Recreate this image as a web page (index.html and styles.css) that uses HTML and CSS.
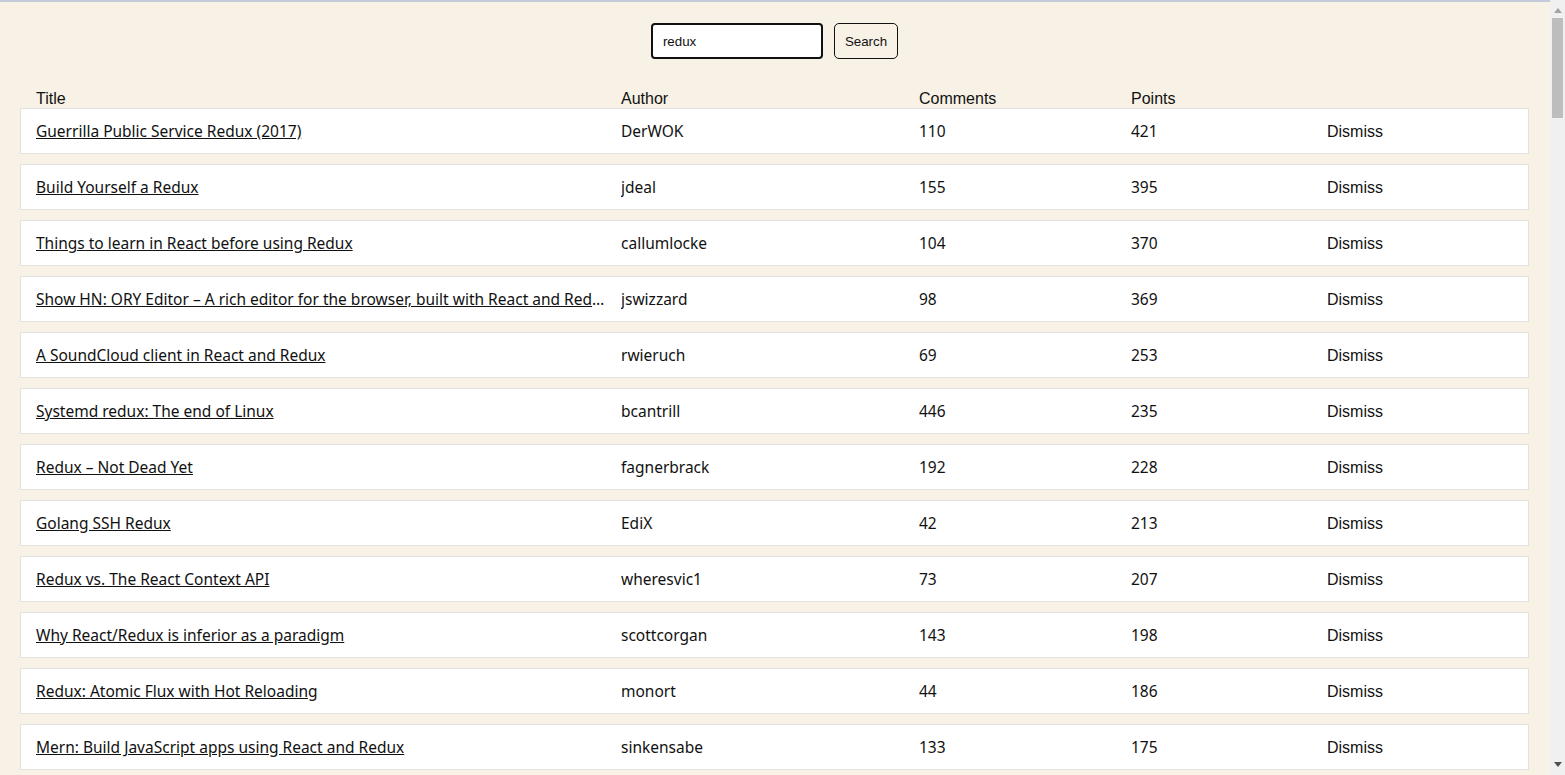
FILE: index.html
```html
<!DOCTYPE html>
<html>
<head>
<meta charset="utf-8">
<link rel="stylesheet" href="styles.css">
</head>
<body>
<div class="app">
  <form class="search">
    <input class="search-input" type="text" value="redux">
    <button class="search-btn" type="button">Search</button>
  </form>
  <div class="table">
    <div class="head">
      <span>Title</span><span>Author</span><span>Comments</span><span>Points</span><span></span>
    </div>
    <div class="row"><span class="c-title"><a href="#">Guerrilla Public Service Redux (2017)</a></span><span>DerWOK</span><span>110</span><span>421</span><span><button class="dismiss" type="button">Dismiss</button></span></div>
    <div class="row"><span class="c-title"><a href="#">Build Yourself a Redux</a></span><span>jdeal</span><span>155</span><span>395</span><span><button class="dismiss" type="button">Dismiss</button></span></div>
    <div class="row"><span class="c-title"><a href="#">Things to learn in React before using Redux</a></span><span>callumlocke</span><span>104</span><span>370</span><span><button class="dismiss" type="button">Dismiss</button></span></div>
    <div class="row"><span class="c-title"><a href="#">Show HN: ORY Editor – A rich editor for the browser, built with React and Redux</a></span><span>jswizzard</span><span>98</span><span>369</span><span><button class="dismiss" type="button">Dismiss</button></span></div>
    <div class="row"><span class="c-title"><a href="#">A SoundCloud client in React and Redux</a></span><span>rwieruch</span><span>69</span><span>253</span><span><button class="dismiss" type="button">Dismiss</button></span></div>
    <div class="row"><span class="c-title"><a href="#">Systemd redux: The end of Linux</a></span><span>bcantrill</span><span>446</span><span>235</span><span><button class="dismiss" type="button">Dismiss</button></span></div>
    <div class="row"><span class="c-title"><a href="#">Redux – Not Dead Yet</a></span><span>fagnerbrack</span><span>192</span><span>228</span><span><button class="dismiss" type="button">Dismiss</button></span></div>
    <div class="row"><span class="c-title"><a href="#">Golang SSH Redux</a></span><span>EdiX</span><span>42</span><span>213</span><span><button class="dismiss" type="button">Dismiss</button></span></div>
    <div class="row"><span class="c-title"><a href="#">Redux vs. The React Context API</a></span><span>wheresvic1</span><span>73</span><span>207</span><span><button class="dismiss" type="button">Dismiss</button></span></div>
    <div class="row"><span class="c-title"><a href="#">Why React/Redux is inferior as a paradigm</a></span><span>scottcorgan</span><span>143</span><span>198</span><span><button class="dismiss" type="button">Dismiss</button></span></div>
    <div class="row"><span class="c-title"><a href="#">Redux: Atomic Flux with Hot Reloading</a></span><span>monort</span><span>44</span><span>186</span><span><button class="dismiss" type="button">Dismiss</button></span></div>
    <div class="row"><span class="c-title"><a href="#">Mern: Build JavaScript apps using React and Redux</a></span><span>sinkensabe</span><span>133</span><span>175</span><span><button class="dismiss" type="button">Dismiss</button></span></div>
  </div>
</div>
<div class="scrollbar" aria-hidden="true">
  <span class="arrow-up"></span>
  <span class="thumb"></span>
  <span class="arrow-down"></span>
</div>
</body>
</html>
```
FILE: styles.css
```css
html, body {
  margin: 0;
  padding: 0;
}
body {
  background: #f8f1e6;
  border-top: 2px solid #c3cad9;
  color: #111;
  font-family: "Liberation Sans", Arial, sans-serif;
  overflow: hidden;
  height: 773px;
}
.app {
  padding: 21px 36px 0 20px;
}
.search {
  display: flex;
  justify-content: center;
  gap: 11px;
  margin: 0;
}
.search-input {
  width: 172px;
  height: 36px;
  box-sizing: border-box;
  border: 2px solid #111;
  border-radius: 4px;
  padding: 0 10px;
  font-family: "Liberation Sans", Arial, sans-serif;
  font-size: 13.33px;
  background: #fff;
  color: #111;
}
.search-btn {
  height: 36px;
  box-sizing: border-box;
  border: 1px solid #111;
  border-radius: 5px;
  background: transparent;
  padding: 0 10px;
  font-family: "Liberation Sans", Arial, sans-serif;
  font-size: 13.33px;
  color: #111;
}
.table {
  margin-top: 19px;
}
.head, .row {
  display: grid;
  grid-template-columns: 585px 298px 212px 196px 1fr;
  align-items: center;
}
.head {
  padding: 0 16px 0 16px;
  height: 30px;
  font-size: 16px;
  align-items: end;
  padding-bottom: 0;
  box-sizing: border-box;
}
.row {
  background: #fff;
  border: 1px solid #e3e1de;
  height: 46px;
  box-sizing: border-box;
  padding: 0 15px;
  margin-bottom: 10px;
  font-family: "Noto Sans", "Open Sans", sans-serif;
  font-size: 15.5px;
}
.row > span {
  white-space: nowrap;
  overflow: hidden;
  text-overflow: ellipsis;
  padding-right: 10px;
}
.row > .c-title {
  padding-right: 14px;
}
.row a {
  color: #111;
  text-decoration: underline;
}
.dismiss {
  background: transparent;
  border: 0;
  padding: 0;
  font-family: "Liberation Sans", Arial, sans-serif;
  font-size: 16px;
  color: #111;
}
.scrollbar {
  position: fixed;
  top: 0;
  right: 0;
  bottom: 0;
  width: 15px;
  background: #f0f0f0;
}
.arrow-up {
  position: absolute;
  top: 8px;
  left: 4px;
  width: 0;
  height: 0;
  border-left: 4px solid transparent;
  border-right: 4px solid transparent;
  border-bottom: 5px solid #a3a3a3;
}
.thumb {
  position: absolute;
  top: 18px;
  left: 2px;
  width: 11px;
  height: 100px;
  background: #bdbdbd;
}
.arrow-down {
  position: absolute;
  bottom: 8px;
  left: 4px;
  width: 0;
  height: 0;
  border-left: 4px solid transparent;
  border-right: 4px solid transparent;
  border-top: 5px solid #505050;
}
```
